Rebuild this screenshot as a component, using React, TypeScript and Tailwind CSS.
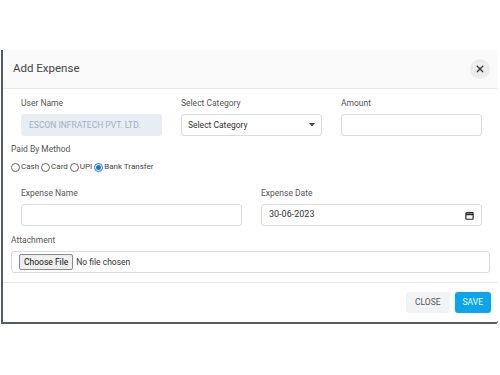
import React from "react";

function Label({ children }: { children: React.ReactNode }) {
  return <div className="mb-[5px] text-[8.5px] leading-[11px] text-[#555]">{children}</div>;
}

function Radio({ label, checked }: { label: string; checked?: boolean }) {
  return (
    <span className="flex items-center">
      <span
        className={
          "flex h-[9px] w-[9px] items-center justify-center rounded-full border " +
          (checked ? "border-[#1a73e8]" : "border-[#666]")
        }
      >
        {checked && <span className="h-[5px] w-[5px] rounded-full bg-[#1a73e8]" />}
      </span>
      <span className="ml-[1px] mr-[2px]">{label}</span>
    </span>
  );
}

export default function App() {
  return (
    <div className="h-[375px] w-[500px] bg-white pt-[50px] font-['Roboto',sans-serif]">
      <div className="ml-[1px] w-[497px] rounded-br-[3px] border-b-2 border-l-2 border-[#555b63] bg-white">
        {/* header */}
        <div className="flex h-[39px] items-center justify-between border-b border-[#e8e8e8] bg-[#fafafa] pl-[10px] pr-[8px]">
          <h2 className="text-[11.5px] text-[#444]">Add Expense</h2>
          <button className="flex h-[20px] w-[20px] items-center justify-center rounded-full bg-[#ececec]">
            <svg width="8" height="8" viewBox="0 0 10 10" stroke="#333" strokeWidth="1.6" strokeLinecap="round">
              <path d="M1.5 1.5l7 7M8.5 1.5l-7 7" />
            </svg>
          </button>
        </div>

        {/* body */}
        <div className="pb-[9px] pl-[8px] pr-[6px] pt-[9px]">
          <div className="grid grid-cols-3 gap-x-[19px] pl-[10px] pr-[10px]">
            <div>
              <Label>User Name</Label>
              <div className="flex h-[22px] items-center rounded-[3px] bg-[#e8edf4] px-[8px] text-[8.5px] text-[#9db0c4]">
                ESCON INFRATECH PVT. LTD.
              </div>
            </div>
            <div>
              <Label>Select Category</Label>
              <div className="flex h-[22px] items-center justify-between rounded-[3px] border border-[#d8dbe0] px-[6px] text-[8.5px] text-[#333]">
                <span>Select Category</span>
                <svg width="6" height="4" viewBox="0 0 6 4">
                  <path d="M0 0h6L3 3.5z" fill="#444" />
                </svg>
              </div>
            </div>
            <div>
              <Label>Amount</Label>
              <div className="h-[22px] rounded-[3px] border border-[#d8dbe0]" />
            </div>
          </div>

          <div className="mt-[8px] text-[8.5px] leading-[11px] text-[#555]">Paid By Method</div>
          <div className="mt-[6px] flex items-center text-[8px] text-[#444]">
            <Radio label="Cash" />
            <Radio label="Card" />
            <Radio label="UPI" />
            <Radio label="Bank Transfer" checked />
          </div>

          <div className="mt-[15px] grid grid-cols-2 gap-x-[19px] pl-[10px] pr-[10px]">
            <div>
              <Label>Expense Name</Label>
              <div className="h-[22px] rounded-[3px] border border-[#d8dbe0]" />
            </div>
            <div>
              <Label>Expense Date</Label>
              <div className="flex h-[22px] items-center justify-between rounded-[3px] border border-[#d8dbe0] px-[7px] text-[9px] text-[#333]">
                <span>30-06-2023</span>
                <svg width="9" height="9" viewBox="0 0 10 10" fill="none" stroke="#222" strokeWidth="1.3">
                  <rect x="1" y="1.8" width="8" height="7.4" rx="0.8" />
                  <path d="M1 3.8h8" strokeWidth="1.8" />
                </svg>
              </div>
            </div>
          </div>

          <div className="mt-[9px]">
            <Label>Attachment</Label>
            <div className="mr-[2px] flex h-[22px] items-center rounded-[3px] border border-[#d8dbe0] px-[7px] text-[8.5px] text-[#333]">
              <span className="rounded-[2px] border border-[#8a8a8a] bg-[#efefef] px-[4px] py-[1px] text-[#111]">
                Choose File
              </span>
              <span className="ml-[3px]">No file chosen</span>
            </div>
          </div>
        </div>

        {/* footer */}
        <div className="flex h-[40px] items-center justify-end gap-[5px] border-t border-[#e8e8e8] pr-[7px]">
          <button className="h-[21px] rounded-[3px] bg-[#f1f3f5] px-[9px] text-[8.5px] text-[#555]">CLOSE</button>
          <button className="h-[21px] rounded-[3px] bg-[#0aa5f0] px-[8px] text-[8.5px] text-white">SAVE</button>
        </div>
      </div>
    </div>
  );
}
